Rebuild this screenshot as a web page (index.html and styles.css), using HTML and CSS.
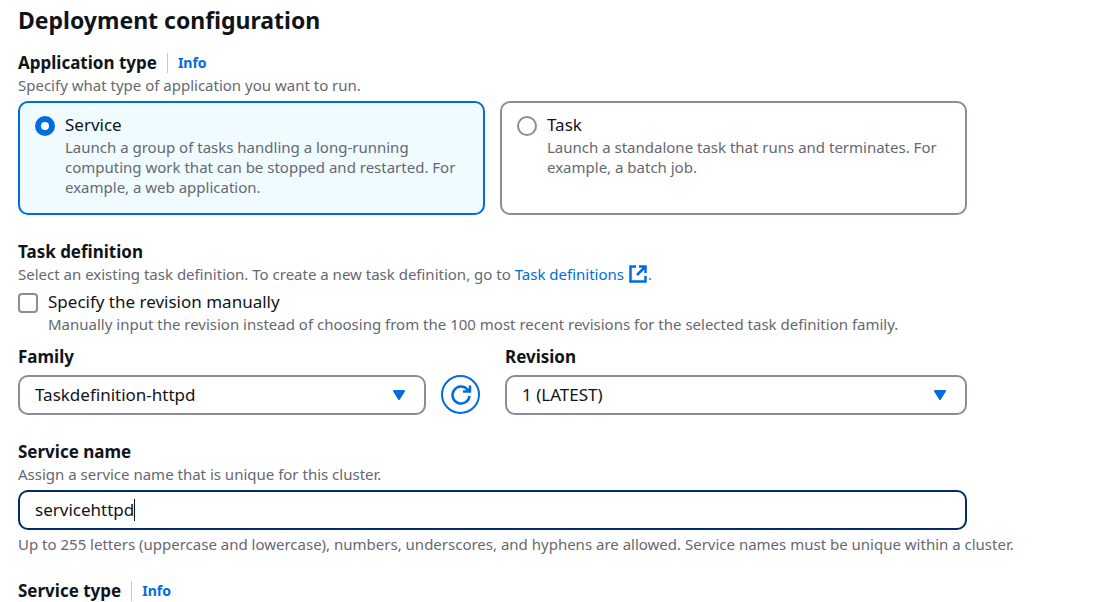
FILE: index.html
```html
<!DOCTYPE html>
<html lang="en">
<head>
<meta charset="utf-8">
<title>Deployment configuration</title>
<link rel="stylesheet" href="styles.css">
</head>
<body>
<form class="deployment">
  <h1 class="title">Deployment configuration</h1>

  <section class="field" role="radiogroup" aria-labelledby="app-type">
    <div class="label-row">
      <h2 class="label" id="app-type">Application type</h2>
      <a class="info" href="#">Info</a>
    </div>
    <p class="hint">Specify what type of application you want to run.</p>
    <div class="tiles">
      <label class="tile tile-selected">
        <input class="radio" type="radio" name="app" checked>
        <span class="choice">
          <span class="choice-name">Service</span>
          <span class="hint">Launch a group of tasks handling a long-running computing work that can be stopped and restarted. For example, a web application.</span>
        </span>
      </label>
      <label class="tile">
        <input class="radio" type="radio" name="app">
        <span class="choice">
          <span class="choice-name">Task</span>
          <span class="hint">Launch a standalone task that runs and terminates. For example, a batch job.</span>
        </span>
      </label>
    </div>
  </section>

  <section class="field">
    <h2 class="label">Task definition</h2>
    <p class="hint">Select an existing task definition. To create a new task definition, go to <a class="link" href="#">Task definitions <svg class="external" viewBox="0 0 20 20" aria-hidden="true"><path d="M8 2.500H2.500v15h15V12M11 2.500h6.500V9M17 3l-8 8"/></svg></a>.</p>
    <label class="check-row">
      <input class="checkbox" type="checkbox">
      <span class="choice">
        <span class="choice-name">Specify the revision manually</span>
        <span class="hint">Manually input the revision instead of choosing from the 100 most recent revisions for the selected task definition family.</span>
      </span>
    </label>
    <div class="columns">
      <div class="column">
        <label class="label" for="family">Family</label>
        <div class="control-row">
          <div class="control-box">
            <select class="control" id="family"><option>Taskdefinition-httpd</option></select>
            <svg class="arrow" viewBox="0 0 14 11" aria-hidden="true"><path d="M2 1h10L7 9z"/></svg>
          </div>
          <button class="refresh" type="button" aria-label="Refresh">
            <svg class="refresh-icon" viewBox="0 0 22 22" aria-hidden="true"><path d="M19.500 12a8.500 8.500 0 1 1-2-6.500L19.500 7.500M20 1.500v6h-7"/></svg>
          </button>
        </div>
      </div>
      <div class="column">
        <label class="label" for="revision">Revision</label>
        <div class="control-row">
          <div class="control-box">
            <select class="control" id="revision"><option>1 (LATEST)</option></select>
            <svg class="arrow" viewBox="0 0 14 11" aria-hidden="true"><path d="M2 1h10L7 9z"/></svg>
          </div>
        </div>
      </div>
    </div>
  </section>

  <section class="field">
    <label class="label" for="service-name">Service name</label>
    <p class="hint">Assign a service name that is unique for this cluster.</p>
    <div class="control-row">
      <div class="control-box">
        <input class="control control-active" id="service-name" type="text" value="servicehttpd" autofocus>
        <span class="text-cursor"></span>
      </div>
    </div>
    <p class="hint hint-line">Up to 255 letters (uppercase and lowercase), numbers, underscores, and hyphens are allowed. Service names must be unique within a cluster.</p>
  </section>

  <section class="field">
    <div class="label-row">
      <h2 class="label">Service type</h2>
      <a class="info" href="#">Info</a>
    </div>
  </section>
</form>
</body>
</html>
```
FILE: styles.css
```css
* { box-sizing: border-box; }

body {
  margin: 0;
  background: #fff;
  color: #0f141a;
  font-family: "Noto Sans", "Open Sans", sans-serif;
  font-size: 17px;
  line-height: 25px;
}

.deployment {
  display: flex;
  flex-direction: column;
  gap: 27px;
  padding: 5px 141px 0 18px;
}

.title {
  margin: 0 0 -9px;
  font-size: 23px;
  line-height: 30px;
}

.label-row { display: flex; align-items: center; }

.label {
  display: block;
  margin: 0;
  font-size: 17px;
  font-weight: 700;
  line-height: 20px;
}

.label + .hint,
.label-row + .hint { margin-top: 2px; }

.info {
  margin-left: 10px;
  padding-left: 10px;
  border-left: 1px solid #c6c6cd;
  color: #006ce0;
  font-size: 14px;
  font-weight: 700;
  line-height: 20px;
  text-decoration: none;
}

.hint {
  display: block;
  margin: 0;
  color: #656871;
  font-size: 15px;
  line-height: 20px;
}

.hint-line { margin-top: 4px; white-space: nowrap; }

.link { color: #006ce0; text-decoration: none; }

.external {
  width: 20px;
  height: 20px;
  vertical-align: bottom;
  fill: none;
  stroke: currentColor;
  stroke-width: 2.500;
}

.tiles {
  display: grid;
  grid-template-columns: 1fr 1fr;
  gap: 15px;
  margin-top: 6px;
}

.tile {
  display: flex;
  gap: 10px;
  padding: 9px 15px 16px;
  border: 2px solid #8c8c94;
  border-radius: 10px;
}

.tile-selected { border-color: #006ce0; background: #f0fbff; }

.radio,
.checkbox {
  appearance: none;
  flex: none;
  width: 20px;
  height: 20px;
  margin: 4px 0 0;
  border: 2px solid #8c8c94;
  background: #fff;
}

.radio { border-radius: 50%; }
.radio:checked { border: 6px solid #006ce0; }
.checkbox { border-radius: 4px; }

.choice { flex: 1; min-width: 0; }
.choice-name { display: block; }

.check-row { display: flex; gap: 10px; margin-top: 5px; }

.columns {
  display: grid;
  grid-template-columns: 1fr 1fr;
  gap: 25px;
  margin-top: 13px;
}

.control-row { display: flex; gap: 15px; margin-top: 6px; }
.label + .control-row { margin-top: 8px; }

.control-box { position: relative; flex: 1; }

.control {
  display: block;
  appearance: none;
  width: 100%;
  height: 40px;
  padding: 0 15px 2px;
  border: 2px solid #8c8c94;
  border-radius: 10px;
  outline: none;
  background: #fff;
  color: inherit;
  font: inherit;
}

.control-active { border-color: #002b66; caret-color: transparent; }

.text-cursor {
  position: absolute;
  top: 9px;
  left: 116px;
  width: 1px;
  height: 22px;
  background: #0f141a;
  pointer-events: none;
}

.arrow {
  position: absolute;
  top: 15px;
  right: 20px;
  width: 14px;
  height: 11px;
  fill: #006ce0;
  stroke: #006ce0;
  stroke-width: 2;
  stroke-linejoin: round;
  pointer-events: none;
}

.refresh {
  display: grid;
  place-items: center;
  width: 39px;
  height: 39px;
  padding: 0;
  border: 2px solid #006ce0;
  border-radius: 50%;
  background: #fff;
  color: #006ce0;
}

.refresh-icon {
  width: 22px;
  height: 22px;
  fill: none;
  stroke: currentColor;
  stroke-width: 2.500;
}
```
